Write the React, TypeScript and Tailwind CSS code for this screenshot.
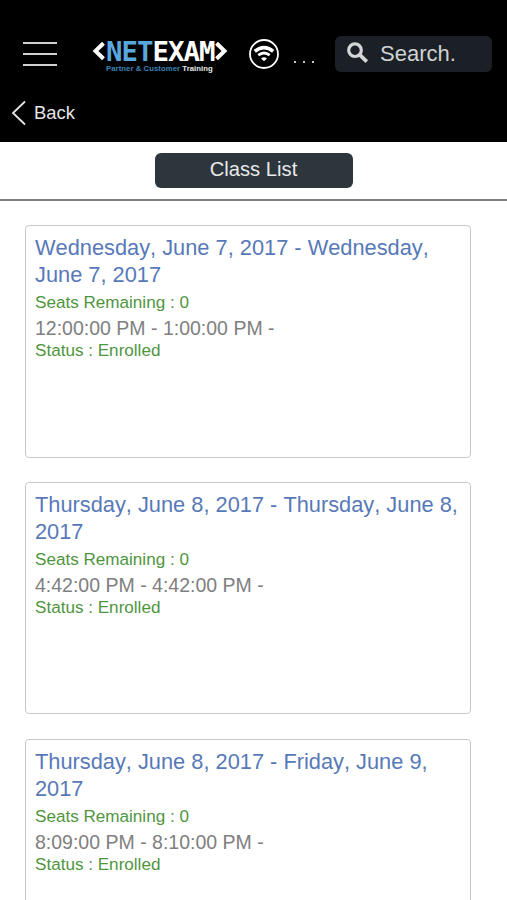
type ClassSession = { dates: string; seats: number; time: string; status: string };

const sessions: ClassSession[] = [
  { dates: 'Wednesday, June 7, 2017 - Wednesday, June 7, 2017', seats: 0, time: '12:00:00 PM - 1:00:00 PM -', status: 'Enrolled' },
  { dates: 'Thursday, June 8, 2017 - Thursday, June 8, 2017', seats: 0, time: '4:42:00 PM - 4:42:00 PM -', status: 'Enrolled' },
  { dates: 'Thursday, June 8, 2017 - Friday, June 9, 2017', seats: 0, time: '8:09:00 PM - 8:10:00 PM -', status: 'Enrolled' },
];

function Logo() {
  return (
    <div className="ml-[35px] mt-[39px] flex w-[136px] shrink-0 items-start">
      <svg width="14" height="24" viewBox="0 0 14 24" fill="none" stroke="#fff" strokeWidth="4" className="shrink-0">
        <path d="M11.5 4.3 3.5 12l8 7.7" />
      </svg>
      <div className="w-[108px] shrink-0">
        <div className="h-[25px] whitespace-nowrap font-['DejaVu_Sans_Mono',monospace] text-[27.4px] font-bold leading-[25px] tracking-[-1px] text-white">
          <span className="text-[#5aa7de]">NET</span>EXAM
        </div>
        <div className="whitespace-nowrap text-[7.7px] font-bold leading-[9px] tracking-[0.08px] text-[#e8e8e8]">
          <span className="text-[#3f83b5]">Partner &amp; Customer</span> Training
        </div>
      </div>
      <svg width="14" height="24" viewBox="0 0 14 24" fill="none" stroke="#fff" strokeWidth="4" className="shrink-0">
        <path d="M2.5 4.3 10.5 12l-8 7.7" />
      </svg>
    </div>
  );
}

function Header() {
  return (
    <header className="h-[142px] bg-black">
      <div className="flex h-[90px] items-start">
        <div className="ml-[23px] mt-[42px] flex w-[34px] shrink-0 flex-col gap-[9px]">
          <span className="h-[2px] bg-[#d2d2d2]" />
          <span className="h-[2px] bg-[#d2d2d2]" />
          <span className="h-[2px] bg-[#d2d2d2]" />
        </div>
        <Logo />
        <svg width="32" height="32" viewBox="0 0 32 32" className="ml-[20px] mt-[38px] shrink-0" fill="none" stroke="#fff">
          <circle cx="16" cy="16" r="14" strokeWidth="1.8" />
          <path d="M6.8 13.4Q16 6 25.2 13.4" strokeWidth="3.6" />
          <path d="M10.3 17.2Q16 12.8 21.7 17.2" strokeWidth="2.8" />
          <path d="M13 20.4Q16 18.2 19 20.4L16 23.2Z" fill="#fff" stroke="none" />
        </svg>
        <div className="ml-[14px] mt-[61px] flex w-[20px] shrink-0 justify-between">
          <span className="size-[2px] bg-[#c4c4c4]" />
          <span className="size-[2px] bg-[#c4c4c4]" />
          <span className="size-[2px] bg-[#c4c4c4]" />
        </div>
        <div className="ml-[21px] mt-[36px] flex h-[36px] w-[157px] shrink-0 items-center rounded-[6px] bg-[#1a2025] text-[22px] text-[#d0d2d4]">
          <svg width="22" height="22" viewBox="0 0 22 22" className="ml-[12px] mt-[-3px] shrink-0" fill="none" stroke="#d3d5d7">
            <circle cx="8" cy="8.2" r="6.3" strokeWidth="3.2" />
            <path d="m12.5 12.7 7.3 7" strokeWidth="3.8" />
          </svg>
          <span className="ml-[11px] mt-[-1px]">Search.</span>
        </div>
      </div>
      <div className="flex h-[46px] items-center text-[18.4px] text-[#e6e6e6]">
        <svg width="16" height="26" viewBox="0 0 16 26" className="ml-[11px] shrink-0" fill="none" stroke="#e6e6e6" strokeWidth="1.8">
          <path d="M14 1.5 2 13l12 11.5" />
        </svg>
        <span className="ml-[7px]">Back</span>
      </div>
    </header>
  );
}

function SessionCard({ session }: { session: ClassSession }) {
  return (
    <article className="h-[232.5px] shrink-0 rounded-[4px] border-[1.5px] border-[#c8c8c8] bg-white pl-[9px] pt-[8px]">
      <h2 className="text-[21.8px] leading-[27px] text-[#5779b8] [font-kerning:none]">{session.dates}</h2>
      <p className="mt-[3px] text-[17.1px] leading-[24px] text-[#4f9540]">Seats Remaining : {session.seats}</p>
      <p className="mt-px text-[19.5px] leading-[25px] text-[#808080]">{session.time}</p>
      <p className="mt-[-1px] text-[17.1px] leading-[22px] text-[#4f9540]">Status : {session.status}</p>
    </article>
  );
}

export default function App() {
  return (
    <div className="h-[900px] w-[507px] overflow-hidden bg-white font-['Liberation_Sans',Arial,sans-serif]">
      <Header />
      <div className="flex h-[59px] justify-center border-b-2 border-[#808080] pt-[11px]">
        <h1 className="h-[35px] w-[198px] rounded-[6px] bg-[#2d353d] text-center text-[20.2px] leading-[32px] text-[#e8eaec]">Class List</h1>
      </div>
      <main className="ml-[25px] mt-[24px] flex w-[446px] flex-col gap-[24.3px]">
        {sessions.map((session) => (
          <SessionCard key={session.time} session={session} />
        ))}
      </main>
    </div>
  );
}
